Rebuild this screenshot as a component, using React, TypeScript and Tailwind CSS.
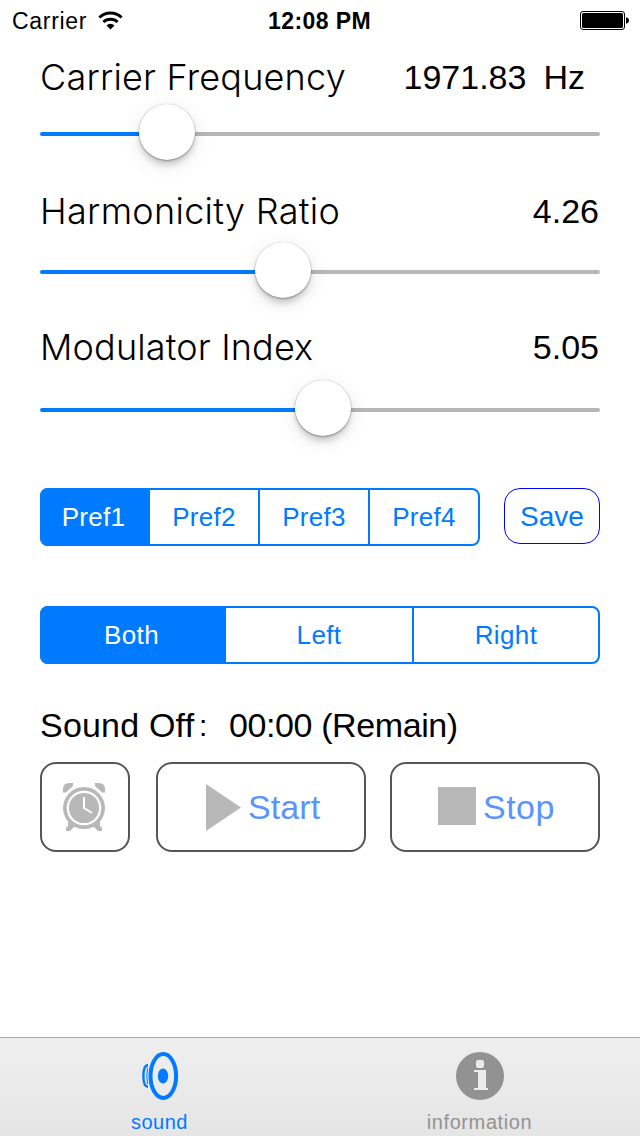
import clsx from "clsx";

type SliderProps = {
  fill: number;
};

function Slider({ fill }: SliderProps) {
  return (
    <div className="flex h-14 w-full items-center">
      <div
        className="h-1 shrink-0 translate-y-0.5 rounded-l-full bg-[#007aff]"
        style={{ width: fill }}
      />
      <div className="z-10 size-14 shrink-0 rounded-full bg-white shadow-[0_0_1px_rgba(0,0,0,0.3),0_1px_2px_rgba(0,0,0,0.3),0_6px_6px_-1px_rgba(0,0,0,0.16),0_5px_20px_rgba(0,0,0,0.1)]" />
      <div className="h-1 flex-1 translate-y-0.5 rounded-r-full bg-[#b6b6b6]" />
    </div>
  );
}

function Label({ text, className }: { text: string; className: string }) {
  return (
    <span
      className={clsx(
        "font-['Inter','Liberation_Sans',sans-serif] text-[36px] font-light whitespace-nowrap",
        className,
      )}
    >
      {text}
    </span>
  );
}

function StatusBar() {
  return (
    <header className="grid h-10 grid-cols-3 items-center pr-[11px] pl-3 text-[23px] leading-10">
      <div className="flex items-center gap-[11px]">
        <span className="pt-px tracking-[0.7px]">Carrier</span>
        <svg width="25" height="19" viewBox="0 0 25 19" fill="none" stroke="#000" strokeWidth="3">
          <path d="M1.4 6.5a16 16 0 0 1 22.2 0" />
          <path d="M5.4 11a10.4 10.4 0 0 1 14.2 0" />
          <path d="M12.5 18.4 8.5 14.4a5.8 5.8 0 0 1 8 0z" fill="#000" stroke="none" />
        </svg>
      </div>
      <span className="pt-px pr-0.5 text-center font-bold tracking-[0.4px]">12:08 PM</span>
      <svg className="justify-self-end" width="49" height="19" viewBox="0 0 49 19">
        <rect x="0.5" y="0.5" width="44" height="18" rx="2.5" fill="#fff" stroke="#000" />
        <rect x="2" y="2" width="41" height="15" rx="1.5" />
        <path d="M46 6.2q3 .8 3 3.3t-3 3.3z" />
      </svg>
    </header>
  );
}

function SoundIcon() {
  return (
    <svg width="40" height="48" viewBox="0 0 40 48" fill="none" stroke="#007aff">
      <ellipse cx="23.3" cy="24" rx="12.8" ry="22" strokeWidth="4" />
      <ellipse cx="23" cy="24" rx="5.2" ry="7.6" fill="#007aff" stroke="none" />
      <path d="M8 13.2C4.2 13.2 3.4 19 3.4 24s.8 10.8 4.6 10.8" strokeWidth="2.4" />
      <path d="M7.5 16q-1.4 8 0 16" strokeWidth="1" />
    </svg>
  );
}

function InfoIcon() {
  return (
    <svg width="48" height="48" viewBox="0 0 48 48">
      <circle cx="24" cy="24" r="24" fill="#929292" />
      <rect x="20" y="8" width="8" height="8" rx="2" fill="#ebebeb" />
      <path d="M18 18h12v18h2v2H18v-2h4V20h-4z" fill="#ebebeb" />
    </svg>
  );
}

function AlarmIcon() {
  return (
    <svg className="mr-0.5" width="42" height="48" viewBox="0 0 42 48" fill="#b8b8b8">
      <path d="M0 6q0-6 6-6h4v3L3 9.5H0z" />
      <path d="M42 6q0-6-6-6h-4v3l7 6.5h3z" />
      <path d="M5 36v7l-2 2v3h4l4-4h20l4 4h4v-3l-2-2v-7z" />
      <circle cx="21" cy="25" r="21" />
      <circle cx="21" cy="25" r="16.2" fill="none" stroke="#fff" strokeWidth="2.2" />
      <path d="M21 14v11l8 5" fill="none" stroke="#fff" strokeWidth="2" />
    </svg>
  );
}

const segment = "flex items-center justify-center border-[#007aff] text-[26px]";
const selected = "z-10 -my-0.5 -ml-0.5 rounded-l-lg bg-[#007aff] text-white";
const actionButton =
  "flex h-[90px] items-center rounded-2xl border-2 border-[#555] text-[34px] text-[#5994ff]";

export default function App() {
  return (
    <div className="flex h-[1136px] w-[640px] flex-col overflow-hidden bg-white font-['Liberation_Sans',Arial,sans-serif] text-black">
      <StatusBar />
      <main className="flex flex-1 flex-col px-10 pt-[17px]">
        <div className="flex h-10 items-center justify-between">
          <Label text="Carrier Frequency" className="tracking-[0.2px]" />
          <div className="flex gap-[17px] pr-[15px] text-[34px]">
            <span>1971.83</span>
            <span>Hz</span>
          </div>
        </div>
        <div className="mt-[7px]">
          <Slider fill={99} />
        </div>

        <div className="mt-[31px] flex h-10 items-center justify-between">
          <Label text="Harmonicity Ratio" className="tracking-[0.3px]" />
          <span className="pr-px text-[34px]">4.26</span>
        </div>
        <div className="mt-[11px]">
          <Slider fill={215} />
        </div>

        <div className="mt-[29px] flex h-10 items-center justify-between">
          <Label text="Modulator Index" className="tracking-[0.15px]" />
          <span className="pr-px text-[34px]">5.05</span>
        </div>
        <div className="mt-[13px]">
          <Slider fill={255} />
        </div>

        <div className="mt-[52px] flex items-start justify-between">
          <div className="flex h-[58px] w-[440px] rounded-lg border-2 border-[#007aff] tracking-[0.3px] text-[#007aff]">
            <button className={clsx(segment, selected, "w-[110px] pr-[3px]")}>Pref1</button>
            <button className={clsx(segment, "w-[110px] border-r-2")}>Pref2</button>
            <button className={clsx(segment, "w-[110px] border-r-2")}>Pref3</button>
            <button className={clsx(segment, "w-[108px]")}>Pref4</button>
          </div>
          <button className="h-14 w-24 rounded-2xl border border-[#0000ff] pt-0.5 text-[28px] text-[#007aff]">
            Save
          </button>
        </div>

        <div className="mt-[60px] flex h-[58px] rounded-lg border-2 border-[#007aff] tracking-[0.4px] text-[#007aff]">
          <button className={clsx(segment, selected, "w-[186px] pr-[3px]")}>Both</button>
          <button className={clsx(segment, "w-[188px] border-r-2")}>Left</button>
          <button className={clsx(segment, "w-[184px]")}>Right</button>
        </div>

        <div className="mt-[41px] flex h-10 items-center text-[34px] whitespace-nowrap">
          <span className="w-[159px] tracking-[0.2px]">Sound Off</span>
          <span className="w-[30px] text-[30px]">:</span>
          <span className="tracking-[-0.4px]">00:00 (Remain)</span>
        </div>

        <div className="mt-[17px] flex">
          <button className={clsx(actionButton, "w-[90px] justify-center")}>
            <AlarmIcon />
          </button>
          <button className={clsx(actionButton, "ml-[26px] w-[210px] pl-12")}>
            <svg width="35" height="47" viewBox="0 0 35 47">
              <path d="M0 0 35 23.5 0 47z" fill="#b8b8b8" />
            </svg>
            <span className="ml-[7px] tracking-[0.1px]">Start</span>
          </button>
          <button className={clsx(actionButton, "ml-6 w-[210px] pl-[46px]")}>
            <span className="mb-0.5 size-[38px] bg-[#b8b8b8]" />
            <span className="ml-[7px] tracking-[0.5px]">Stop</span>
          </button>
        </div>
      </main>

      <nav className="grid h-[99px] grid-cols-2 border-t border-[#aaa] bg-linear-to-b from-[#efefef] to-[#e5e5e5] text-xl">
        <div className="flex flex-col items-center pt-3.5 text-[#007aff]">
          <SoundIcon />
          <span className="mt-2 pr-px leading-7 tracking-[0.5px]">sound</span>
        </div>
        <div className="flex flex-col items-center pt-3.5 text-[#929292]">
          <InfoIcon />
          <span className="mt-2 pr-px leading-7 tracking-[0.6px]">information</span>
        </div>
      </nav>
    </div>
  );
}
